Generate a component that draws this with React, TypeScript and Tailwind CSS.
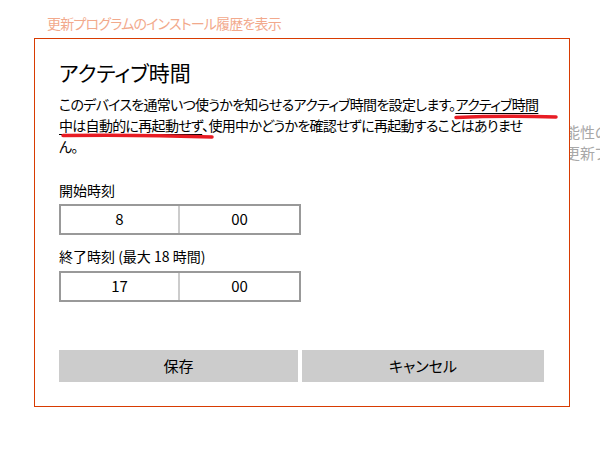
import React from "react";

const jp = { fontFamily: '"Noto Sans CJK JP", "Noto Sans", sans-serif', fontFeatureSettings: '"palt"' } as React.CSSProperties;

function TimeBox({ hour, minute }: { hour: string; minute: string }) {
  return (
    <div className="flex h-[31px] w-[242px] border-2 border-[#999999] bg-white text-[15px] text-black">
      <div className="flex w-[119px] items-center justify-center border-r-2 border-[#cccccc]">{hour}</div>
      <div className="flex flex-1 items-center justify-center">{minute}</div>
    </div>
  );
}

export default function App() {
  return (
    <div className="relative h-[449px] w-[600px] overflow-hidden bg-white" style={jp}>
      {/* background page */}
      <div className="pl-[47px] pt-[12px] text-[14px] leading-[22px] tracking-[-0.8px] text-[#f2a98c]">更新プログラムのインストール履歴を表示</div>
      <div className="mt-[87px] flex flex-col pl-[565px] text-[15px] leading-[21px] whitespace-nowrap text-[#a8a8a8]">
        <span>能性のある</span>
        <span>更新プログラム</span>
      </div>

      {/* dialog */}
      <div className="absolute left-[34px] top-[38px] flex h-[369px] w-[536px] flex-col border border-[#d83b01] bg-white px-[24px] text-black">
        <h1 className="mt-[19px] text-[21px] leading-[28px]">アクティブ時間</h1>
        <p className="mt-[8px] flex flex-col text-[14px] leading-[21px] tracking-[-0.7px] whitespace-nowrap">
          <span>
            このデバイスを通常いつ使うかを知らせるアクティブ時間を設定します。
            <span className="underline decoration-1 underline-offset-[3px]">アクティブ時間</span>
          </span>
          <span>
            <span className="underline decoration-1 underline-offset-[3px]">中は自動的に再起動せず</span>
            、使用中かどうかを確認せずに再起動することはありませ
          </span>
          <span>ん。</span>
        </p>
        <div className="mt-[23px] text-[14px] leading-[20px]">開始時刻</div>
        <div className="mt-[4px]">
          <TimeBox hour="8" minute="00" />
        </div>
        <div className="mt-[11px] text-[14px] leading-[20px]">終了時刻 (最大 18 時間)</div>
        <div className="mt-[5px]">
          <TimeBox hour="17" minute="00" />
        </div>
        <div className="mt-[48px] flex gap-[4px]">
          <button className="h-[32px] w-[239px] bg-[#cccccc] text-[15px] text-black">保存</button>
          <button className="h-[32px] w-[242px] bg-[#cccccc] text-[15px] text-black">キャンセル</button>
        </div>
      </div>

      {/* red annotation marks */}
      <svg className="pointer-events-none absolute left-0 top-0" width="600" height="449" viewBox="0 0 600 449">
        <path d="M456 117.5 Q505 115.5 556 117" stroke="#e81c24" strokeWidth="3.5" strokeLinecap="round" fill="none" />
        <path d="M63 135.5 Q140 134.5 212 137" stroke="#e81c24" strokeWidth="3.5" strokeLinecap="round" fill="none" />
      </svg>
    </div>
  );
}
